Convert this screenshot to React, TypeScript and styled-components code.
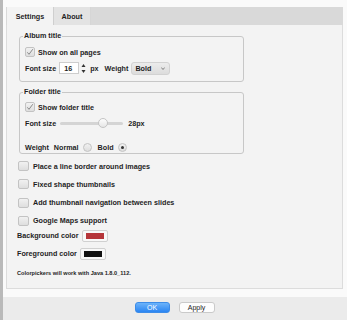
import styled, { createGlobalStyle } from "styled-components";

const GlobalStyle = createGlobalStyle`
  html, body {
    margin: 0;
    padding: 0;
    background: #f6f6f6;
  }
  body {
    font-family: "Liberation Sans", Arial, sans-serif;
  }
`;

const Window = styled.div`
  width: 347px;
  height: 320px;
  box-sizing: border-box;
  display: flex;
  flex-direction: column;
  background: #f7f7f7;
  border-left: 3px solid #b9b9b9;
  color: #1e1e1e;
  font-size: 7.2px;
  font-weight: bold;
`;

const Main = styled.div`
  flex: 1;
  padding: 7px 4px 8px 3px;
  display: flex;
  flex-direction: column;
  background: #fafafa;
`;

const TabBar = styled.div`
  height: 18px;
  display: flex;
  background: #d9d9d9;
  padding-left: 1px;
`;

const Tab = styled.div<{ $active?: boolean; $width: number }>`
  width: ${(p) => p.$width}px;
  display: flex;
  align-items: center;
  justify-content: center;
  background: ${(p) => (p.$active ? "#f3f3f3" : "#e3e3e3")};
  border-right: 1px solid ${(p) => (p.$active ? "#cfcfcf" : "#d6d6d6")};
`;

const Panel = styled.div`
  flex: 1;
  background: #f3f3f3;
  border: 1px solid #dcdcdc;
  border-top: none;
  padding: 7px 12px 0 11px;
  display: flex;
  flex-direction: column;
`;

const Group = styled.fieldset<{ $top: number; $bottom: number }>`
  margin: ${(p) => p.$top}px 0 0 1px;
  padding: 0 5px ${(p) => p.$bottom}px;
  width: 225px;
  box-sizing: border-box;
  border: 1px solid #c7c7c7;
  border-radius: 3px;
  display: flex;
  flex-direction: column;
`;

const Legend = styled.legend`
  margin-left: -2px;
  padding: 0 1px;
  line-height: 8px;
`;

const Row = styled.div<{ $top?: number; $gap?: number; $h?: number }>`
  display: flex;
  align-items: center;
  margin-top: ${(p) => p.$top ?? 0}px;
  gap: ${(p) => p.$gap ?? 3}px;
  height: ${(p) => p.$h ?? 12}px;
`;

const Box = styled.div`
  width: 10px;
  height: 10px;
  box-sizing: border-box;
  border: 1px solid #c3c3c3;
  border-radius: 2px;
  background: linear-gradient(#f1f1f1, #dedede);
  display: flex;
  align-items: center;
  justify-content: center;
  flex-shrink: 0;
`;

const Radio = styled(Box)`
  width: 9px;
  height: 9px;
  border-radius: 50%;
`;

const Dot = styled.div`
  width: 3px;
  height: 3px;
  border-radius: 50%;
  background: #333;
`;

const NumberBox = styled.div`
  width: 20px;
  height: 12px;
  box-sizing: border-box;
  background: #fff;
  border: 1px solid #cdcdcd;
  display: flex;
  align-items: center;
  padding-left: 4px;
`;

const Stepper = styled.div`
  width: 8px;
  height: 13px;
  display: flex;
  align-items: center;
  justify-content: center;
  margin-left: -3px;
`;

const Select = styled.div`
  width: 39px;
  height: 13px;
  box-sizing: border-box;
  border-radius: 3px;
  background: linear-gradient(#ececec, #dcdcdc);
  border: 1px solid #d2d2d2;
  display: flex;
  align-items: center;
  justify-content: space-between;
  padding: 0 4px 0 3px;
`;

const Track = styled.div`
  position: relative;
  width: 63px;
  height: 3px;
  border-radius: 2px;
  background: #d4d4d4;
  margin: 0 2px 0 1px;
`;

const Knob = styled.div<{ $at: number }>`
  position: absolute;
  top: -4px;
  left: ${(p) => p.$at}px;
  width: 10px;
  height: 10px;
  box-sizing: border-box;
  border-radius: 50%;
  border: 1px solid #c4c4c4;
  background: linear-gradient(#fdfdfd, #e6e6e6);
`;

const OptionList = styled.div`
  display: flex;
  flex-direction: column;
  margin-top: 6px;
  gap: 6.3px;
`;

const Option = styled.div`
  display: flex;
  align-items: center;
  gap: 4px;
  height: 12px;
`;

const OptionBox = styled(Box)`
  width: 11px;
  height: 10px;
`;

const ColorRow = styled.div<{ $top: number }>`
  display: flex;
  align-items: center;
  gap: 3px;
  height: 12px;
  margin-top: ${(p) => p.$top}px;
  margin-left: -1px;
`;

const Swatch = styled.div<{ $color: string }>`
  width: 26px;
  height: 12px;
  box-sizing: border-box;
  border: 1px solid #d0d0d0;
  border-radius: 2px;
  background: #f8f8f8;
  padding: 2px 3px;
  &::after {
    content: "";
    display: block;
    height: 100%;
    background: ${(p) => p.$color};
  }
`;

const Note = styled.div`
  margin-top: 10px;
  margin-left: -1px;
  font-size: 5.6px;
`;

const Footer = styled.div`
  height: 23px;
  background: #ebebeb;
  display: flex;
  justify-content: center;
  align-items: flex-start;
  padding-top: 5px;
  box-sizing: border-box;
  gap: 9px;
  padding-right: 1px;
`;

const Button = styled.div<{ $primary?: boolean }>`
  width: ${(p) => (p.$primary ? 35 : 36)}px;
  height: 11px;
  box-sizing: border-box;
  border-radius: 3px;
  display: flex;
  align-items: center;
  justify-content: center;
  font-weight: normal;
  font-size: 7px;
  color: ${(p) => (p.$primary ? "#fff" : "#222")};
  background: ${(p) =>
    p.$primary ? "linear-gradient(#6cb3fa, #2a85f2)" : "#fdfdfd"};
  border: 1px solid ${(p) => (p.$primary ? "#3c8ce8" : "#cacaca")};
`;

const Check = () => (
  <svg width="8" height="8" viewBox="0 0 8 8">
    <path d="M1.3 4.3 L3 6.3 L6.8 1.2" fill="none" stroke="#8a8a8a" strokeWidth="1" />
  </svg>
);

const Arrows = () => (
  <svg width="5" height="11" viewBox="0 0 5 11">
    <path d="M2.5 1 L4.5 4 L0.5 4 Z" fill="#333" />
    <path d="M2.5 10 L4.5 7 L0.5 7 Z" fill="#333" />
  </svg>
);

const Chevron = () => (
  <svg width="4" height="3" viewBox="0 0 4 3">
    <path d="M0.3 0.5 L2 2.5 L3.7 0.5" fill="none" stroke="#666" strokeWidth="0.8" />
  </svg>
);

const options = [
  "Place a line border around images",
  "Fixed shape thumbnails",
  "Add thumbnail navigation between slides",
  "Google Maps support",
];

export default function App() {
  return (
    <>
      <GlobalStyle />
      <Window>
        <Main>
          <TabBar>
            <Tab $active $width={46}>Settings</Tab>
            <Tab $width={36}>About</Tab>
          </TabBar>
          <Panel>
            <Group $top={0} $bottom={7}>
              <Legend>Album title</Legend>
              <Row $top={6}>
                <Box>
                  <Check />
                </Box>
                <span>Show on all pages</span>
              </Row>
              <Row $top={4}>
                <span>Font size</span>
                <NumberBox>16</NumberBox>
                <Stepper>
                  <Arrows />
                </Stepper>
                <span>px</span>
                <span style={{ marginLeft: 3 }}>Weight</span>
                <Select>
                  <span>Bold</span>
                  <Chevron />
                </Select>
              </Row>
            </Group>

            <Group $top={6} $bottom={1}>
              <Legend>Folder title</Legend>
              <Row $top={5}>
                <Box>
                  <Check />
                </Box>
                <span>Show folder title</span>
              </Row>
              <Row $top={4}>
                <span>Font size</span>
                <Track>
                  <Knob $at={38} />
                </Track>
                <span>28px</span>
              </Row>
              <Row $top={13} $gap={4} $h={10}>
                <span>Weight</span>
                <span style={{ marginLeft: 1 }}>Normal</span>
                <Radio />
                <span style={{ marginLeft: 2 }}>Bold</span>
                <Radio>
                  <Dot />
                </Radio>
              </Row>
            </Group>

            <OptionList>
              {options.map((o) => (
                <Option key={o}>
                  <OptionBox />
                  <span>{o}</span>
                </Option>
              ))}
            </OptionList>

            <ColorRow $top={3}>
              <span>Background color</span>
              <Swatch $color="#b5353a" />
            </ColorRow>
            <ColorRow $top={6}>
              <span>Foreground color</span>
              <Swatch $color="#111" />
            </ColorRow>
            <Note>Colorpickers will work with Java 1.8.0_112.</Note>
          </Panel>
        </Main>
        <Footer>
          <Button $primary>OK</Button>
          <Button>Apply</Button>
        </Footer>
      </Window>
    </>
  );
}
